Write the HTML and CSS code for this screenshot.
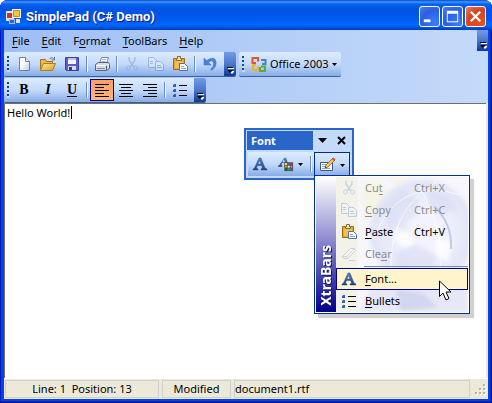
FILE: index.html
```html
<!DOCTYPE html>
<html lang="en">
<head>
<meta charset="utf-8">
<title>SimplePad (C# Demo)</title>
<link rel="stylesheet" href="styles.css">
</head>
<body>
<svg class="defs" aria-hidden="true">
  <defs>
    <linearGradient id="gold" x2="1" y2="1"><stop stop-color="#fff0a0"/><stop offset="1" stop-color="#e09a1c"/></linearGradient>
    <linearGradient id="paper" x2="1" y2="1"><stop offset=".4" stop-color="#fff"/><stop offset="1" stop-color="#b9cbe6"/></linearGradient>
    <linearGradient id="ink" x2="0" y2="1"><stop stop-color="#5b86c4"/><stop offset="1" stop-color="#1d3f7c"/></linearGradient>
    <symbol id="new" viewBox="0 0 16 16"><path d="M3.5 1.500h6l4 4v9h-10z" fill="url(#paper)" stroke="#6f82a6"/><path d="M9.500 1.500v4h4" fill="#dfe8f6" stroke="#6f82a6"/></symbol>
    <symbol id="open" viewBox="0 0 16 16"><path d="M.5 13.500v-10h5l1 2h6v8z" fill="#f0b840" stroke="#9a7420"/><path d="M.5 14.500l3-7h12l-3 7z" fill="url(#gold)" stroke="#b07f1c"/><path d="M9.500 2.500q3-2 5 1m0-2.500v3h-3" fill="none" stroke="#5d7fae"/></symbol>
    <symbol id="save" viewBox="0 0 16 16"><path d="M1.500 1.500h13v13h-12l-1-1z" fill="#5860c8" stroke="#3c4290"/><path d="M4 2h8v6H4z" fill="#f4f6ff"/><path d="M4 2h8v2H4z" fill="#b9c0ee"/><path d="M4 10h8v4H4z" fill="#d6d9e8"/><path d="M5 11h3v3H5z" fill="#343a80"/></symbol>
    <symbol id="print" viewBox="0 0 16 16"><path d="M5.500 7.500l2-6h7l-2 6z" fill="#fff" stroke="#7187ad"/><path d="M8 3.500h4M7.500 5.500h4" stroke="#9cb0cf"/><path d="M1.500 8.500l3-2h10l1 2v4l-3 2h-11z" fill="#d5dae3" stroke="#58657d"/><path d="M2 9.500h10.500l2.500-1.500" fill="none" stroke="#fff"/><path d="M3 12.500h8" stroke="#7f8ba2"/><path d="M12.500 9.500v4.500" stroke="#58657d"/></symbol>
    <symbol id="cut" viewBox="0 0 16 16"><g fill="none" stroke="#7c99cd"><path d="M5 1v3l5 7M11 1v3l-5 7" stroke-width="1.500"/><circle cx="4.500" cy="12" r="2"/><circle cx="11.500" cy="12" r="2"/></g></symbol>
    <symbol id="copy" viewBox="0 0 16 16"><g fill="#eef3fc" stroke="#6689c5"><path d="M.5 1.500h5l3 3v7h-8z"/><path d="M2 5.500h3M2 7.500h3"/><path d="M7.500 5.500h5l3 3v6h-8z"/><path d="M9 9.500h4M9 11.500h5"/></g></symbol>
    <symbol id="paste" viewBox="0 0 16 16"><path d="M1.500 2.500h11v11h-11z" fill="url(#gold)" stroke="#9a6d12"/><path d="M2 3h10v10H2z" fill="#eba72a"/><path d="M3 5h8v7H3z" fill="#f5bd4b"/><path d="M4.500 4.500v-2h1v-2h3v2h1v2z" fill="#eee1a8" stroke="#7b6a42"/><path d="M7.500 7.500h5l3 3v4h-8z" fill="#f4f8ff" stroke="#536fa4"/><path d="M9 10.500h3M9 12.500h5" stroke="#8aa2cf"/></symbol>
    <symbol id="undo" viewBox="0 0 16 16"><path d="M2 2v7h7L6.500 6.500Q10 3 11.500 6.500q1 3.500-2.500 6.500v1.500q6-3.500 5-9Q12.500-.5 4.500 4.500z" fill="#4b82d8" stroke="#3769b8" stroke-width=".5"/></symbol>
    <symbol id="left" viewBox="0 0 16 16"><path d="M1 2.500h14M1 5.500h9M1 8.500h14M1 11.500h9M1 14.500h14" stroke="#000"/></symbol>
    <symbol id="center" viewBox="0 0 16 16"><path d="M1 2.500h14M3 5.500h10M1 8.500h14M3 11.500h10M1 14.500h14" stroke="#000"/></symbol>
    <symbol id="right" viewBox="0 0 16 16"><path d="M1 2.500h14M6 5.500h9M1 8.500h14M6 11.500h9M1 14.500h14" stroke="#000"/></symbol>
    <symbol id="bullets" viewBox="0 0 16 16"><path d="M1 2h3v3H1zM1 7h3v3H1zM1 12h3v3H1z" fill="#365fae"/><path d="M1 2h1v1H1zM1 7h1v1H1zM1 12h1v1H1z" fill="#9db9e5"/><path d="M7 3.500h8M7 8.500h8M7 13.500h8" stroke="#000"/></symbol>
    <symbol id="fontcolor" viewBox="0 0 18 16"><path d="M7 1h2l3 8 2 1v1H8v-1l1-1-1-2H4.500L4 9l1 1v1H0v-1l1.500-1zM6.500 3L5 6h3z" fill="url(#ink)"/><path d="M7 6h10v10H7z" fill="#555"/><path d="M8 7h2v2H8z" fill="#ff0"/><path d="M11 7h2v2h-2z" fill="#36c"/><path d="M14 7h2v2h-2z" fill="#e22"/><path d="M8 10h2v2H8z" fill="#f90"/><path d="M11 10h2v2h-2z" fill="#fff"/><path d="M14 10h2v2h-2z" fill="#f5f"/><path d="M8 13h2v2H8z" fill="#070"/><path d="M11 13h2v2h-2z" fill="#0c3"/><path d="M14 13h2v2h-2z" fill="#45f"/></symbol>
    <symbol id="edit" viewBox="0 0 16 16"><path d="M.5 5.500h12v8H.5z" fill="#fff" stroke="#3c568c"/><path d="M2 7.500h6M2 9.500h5M2 11.500h8" stroke="#8ca4cc"/><path d="M5 11l1-3 7-7 2 2-7 7z" fill="#f8c45a" stroke="#80602a" stroke-width=".8"/><path d="M12 2l1.500-1.500 2 2L14 4z" fill="#e04838"/><path d="M5 11l.5-1.500 1 1z" fill="#222"/></symbol>
    <symbol id="clear" viewBox="0 0 16 16"><path d="M1.500 10.500l8-8h4l1 2-8 8h-4z" fill="#fff" stroke="#8f96b0"/><path d="M1.500 10.500h4l8-8M5.500 10.500l1 2M8 14.500h6" fill="none" stroke="#8f96b0"/></symbol>
    <symbol id="fontA" viewBox="0 0 16 16"><path d="M7 2h2l4 10 2 1v1H9v-1l1.500-1-1-2.500h-4L4.500 12 6 13v1H1v-1l1.500-1zM7.500 4.500L6 8h3z" fill="url(#ink)" stroke="#2d5596" stroke-width=".5"/></symbol>
    <symbol id="office" viewBox="0 0 16 16"><g fill="none" stroke-width="2"><path d="M5 7H1.500V2H7v3.500" stroke="#e8502c"/><path d="M10 4h4.500v4H11" stroke="#3f83d8"/><path d="M5 9H2v5h5v-3.500" stroke="#f0b41c"/><path d="M9 11v4h5v-4.500H10" stroke="#62a83c"/></g></symbol>
    <symbol id="more" viewBox="0 0 8 8"><path d="M2 2h6v1H2zM3 5h6l-3 3z" fill="#fff"/><path d="M1 1h6v1H1zM1 4h6L4 7z" fill="#000"/></symbol>
    <symbol id="down" viewBox="0 0 5 3"><path d="M0 0h5L2.500 3z"/></symbol>
  </defs>
</svg>

<main class="window">
  <header class="titlebar">
    <svg class="app-icon" viewBox="0 0 16 16" aria-hidden="true"><path d="M0 2h8v10H0z" fill="#e8e2d6"/><path d="M1 4h5v5H1z" fill="#c33628"/><path d="M6 0h9v9H6z" fill="#f4f1e6"/><path d="M7.500 1.500h6v6h-6z" fill="#f6c544" stroke="#c98f1e"/><path d="M3 10h6v5H3z" fill="#9cbcf2"/><path d="M4 11h4v3H4z" fill="#2f66d0"/><path d="M10 10h4v4h-4z" fill="#e6e1d2"/></svg>
    <h1 class="title">SimplePad (C# Demo)</h1>
    <button class="caption" aria-label="Minimize"><svg viewBox="0 0 20 20"><path d="M4 13h7v3H4z"/></svg></button>
    <button class="caption" aria-label="Maximize"><svg viewBox="0 0 20 20"><path fill-rule="evenodd" d="M4 4h12v12H4zm1 3v8h10V7z"/></svg></button>
    <button class="caption close" aria-label="Close"><svg viewBox="0 0 20 20"><path d="M5 5l10 10M15 5L5 15" stroke="#fff" stroke-width="2.400"/></svg></button>
  </header>

  <div class="client">
    <div class="dock">
      <nav class="menubar">
        <button><u>F</u>ile</button><button><u>E</u>dit</button><button>F<u>o</u>rmat</button><button><u>T</u>oolBars</button><button><u>H</u>elp</button>
        <button class="overflow" aria-label="Menu options"><svg><use href="#more"/></svg></button>
      </nav>
      <div class="bar-row">
        <div class="toolbar" role="toolbar" aria-label="Standard">
          <span class="grip"></span>
          <button class="tool" aria-label="New"><svg><use href="#new"/></svg></button>
          <button class="tool" aria-label="Open"><svg><use href="#open"/></svg></button>
          <button class="tool" aria-label="Save"><svg><use href="#save"/></svg></button>
          <span class="sep"></span>
          <button class="tool" aria-label="Print"><svg><use href="#print"/></svg></button>
          <span class="sep"></span>
          <button class="tool" aria-label="Cut" disabled><svg><use href="#cut"/></svg></button>
          <button class="tool" aria-label="Copy" disabled><svg><use href="#copy"/></svg></button>
          <button class="tool" aria-label="Paste"><svg><use href="#paste"/></svg></button>
          <span class="sep"></span>
          <button class="tool" aria-label="Undo"><svg><use href="#undo"/></svg></button>
          <button class="overflow" aria-label="Standard options"><svg><use href="#more"/></svg></button>
        </div>
        <div class="toolbar" role="toolbar" aria-label="Theme">
          <span class="grip"></span>
          <button class="theme"><svg><use href="#office"/></svg>Office 2003<svg class="arrow"><use href="#down"/></svg></button>
        </div>
      </div>
      <div class="bar-row">
        <div class="toolbar" role="toolbar" aria-label="Formatting">
          <span class="grip"></span>
          <button class="tool glyph" aria-label="Bold"><b>B</b></button>
          <button class="tool glyph" aria-label="Italic"><i>I</i></button>
          <button class="tool glyph" aria-label="Underline"><u>U</u></button>
          <span class="sep"></span>
          <button class="tool checked" aria-label="Align left" aria-pressed="true"><svg><use href="#left"/></svg></button>
          <button class="tool" aria-label="Align center"><svg><use href="#center"/></svg></button>
          <button class="tool" aria-label="Align right"><svg><use href="#right"/></svg></button>
          <span class="sep"></span>
          <button class="tool" aria-label="Bullets"><svg><use href="#bullets"/></svg></button>
          <button class="overflow" aria-label="Formatting options"><svg><use href="#more"/></svg></button>
        </div>
      </div>
    </div>

    <div class="editor">
      <textarea aria-label="Document" spellcheck="false">Hello World!</textarea>
      <span class="caret"></span>
    </div>

    <footer class="status">
      <span class="cell position">Line: 1&nbsp; Position: 13</span>
      <span class="cell modified">Modified</span>
      <span class="cell file">document1.rtf</span>
      <svg class="size-grip" viewBox="0 0 11 11" aria-hidden="true"><path d="M9 1h2v2H9zM5 5h2v2H5zM9 5h2v2H9zM1 9h2v2H1zM5 9h2v2H5zM9 9h2v2H9z" fill="#fff"/><path d="M8 0h2v2H8zM4 4h2v2H4zM8 4h2v2H8zM0 8h2v2H0zM4 8h2v2H4zM8 8h2v2H8z" fill="#b5b2a2"/></svg>
    </footer>
  </div>
</main>

<section class="palette" aria-label="Font">
  <header class="palette-head">
    <h2>Font</h2>
    <button aria-label="Font bar options"><svg viewBox="0 0 11 11"><path d="M1 3h9L5.500 8z"/></svg></button>
    <button aria-label="Close Font bar"><svg viewBox="0 0 11 11"><path d="M2 2l7 7M9 2L2 9" stroke="#000" stroke-width="2"/></svg></button>
  </header>
  <div class="palette-tools">
    <button class="tool" aria-label="Font"><svg><use href="#fontA"/></svg></button>
    <button class="tool split" aria-label="Font color"><svg><use href="#fontcolor"/></svg><svg class="arrow"><use href="#down"/></svg></button>
    <span class="sep"></span>
    <button class="tool split opened" aria-label="Edit" aria-expanded="true"><svg><use href="#edit"/></svg><svg class="arrow"><use href="#down"/></svg></button>
  </div>
</section>

<div class="popup" role="menu">
  <div class="brand"><span>XtraBars</span></div>
  <svg class="globe" viewBox="0 0 133 137" preserveAspectRatio="none" aria-hidden="true">
    <defs>
      <filter id="soft"><feGaussianBlur stdDeviation="2"/></filter>
      <radialGradient id="sphere"><stop offset=".4" stop-color="#f2f3fd"/><stop offset="1" stop-color="#e0e3f7"/></radialGradient>
    </defs>
    <rect width="133" height="137" fill="#f6f6fc"/>
    <path d="M0 0h22v137H0z" fill="#f3f2e8"/>
    <g filter="url(#soft)">
      <path d="M26 5h20l10 15-10 20-18 5zM52 0h24l-14 8z" fill="#f6f4e4"/>
      <circle cx="87" cy="56" r="53" fill="url(#sphere)"/>
      <path d="M48 28l20-15 15 10-2 16-11 7 3 10-10 10-10-8zM93 12l20 8 11 18-10-4-8 6-13-11zM60 76l20-8 22 12-7 17-15 14-18-9z" fill="#d3d7f1" opacity=".5"/>
      <path d="M58 52l14 3 7 12-9 5-12-9zM101 62l17 4-5 21-13-8z" fill="#fff" opacity=".8"/>
      <path d="M45 98q36 29 80-1l8 18v22H22z" fill="#e7e8f7"/>
      <path d="M60 114l28 4 15 15-38 3z" fill="#d2d6ee"/>
    </g>
    <g fill="none"><path d="M38 63Q61-1 126 18M56 102Q50 36 101 5M102 106Q115 65 83 8" stroke="#fff" opacity=".7"/><path d="M99 30q18 17 17 43" stroke="#c3c9e6" stroke-width="2"/></g>
  </svg>
  <div class="items">
    <button role="menuitem" disabled><svg><use href="#cut"/></svg><span>Cu<u>t</u></span><kbd>Ctrl+X</kbd></button>
    <button role="menuitem" disabled><svg><use href="#copy"/></svg><span><u>C</u>opy</span><kbd>Ctrl+C</kbd></button>
    <button role="menuitem"><svg><use href="#paste"/></svg><span><u>P</u>aste</span><kbd>Ctrl+V</kbd></button>
    <button role="menuitem" disabled><svg><use href="#clear"/></svg><span>Cle<u>a</u>r</span></button>
    <hr>
    <button role="menuitem" class="hot"><svg><use href="#fontA"/></svg><span><u>F</u>ont...</span></button>
    <button role="menuitem"><svg><use href="#bullets"/></svg><span><u>B</u>ullets</span></button>
  </div>
</div>

<svg class="pointer" viewBox="0 0 13 21" aria-hidden="true"><path d="M.5 1v15.500l3.500-3.500 3 7 3-1.500-3-6.500h5z" fill="#fff" stroke="#000"/></svg>
</body>
</html>
```
FILE: styles.css
```css
* { box-sizing: border-box; }

body {
  margin: 0;
  min-height: 100vh;
  background: #fff;
  color: #000;
  font: 11px/14px "Noto Sans", "Open Sans", sans-serif;
}

button {
  margin: 0;
  padding: 0;
  border: 0;
  background: none;
  color: inherit;
  font: inherit;
}

u { text-underline-offset: 2px; }
.defs { position: absolute; width: 0; height: 0; }

/* Window frame */
.window {
  display: flex;
  flex-direction: column;
  height: 100vh;
  padding: 0 4px 4px;
  border-radius: 8px 8px 0 0;
  background: #0842de;
  box-shadow: inset -1px -1px #00138c, inset 1px 0 #0019cf, inset -2px -2px #0030c4;
}

.titlebar {
  display: flex;
  align-items: center;
  gap: 2px;
  height: 30px;
  margin: 0 -4px;
  padding: 3px 6px 0;
  border-radius: 8px 8px 0 0;
  background: linear-gradient(#0a48c8 0, #3c96ff 2px, #0663f0 4px, #0054e3 8px, #0058ec 18px, #0068ff 25px, #0050dc 28px, #0039b4);
}

.app-icon { width: 16px; height: 16px; margin-right: 2px; }

.title {
  flex: 1;
  margin: 0;
  color: #fff;
  font: bold 13px/18px Roboto, "Open Sans", sans-serif;
  text-shadow: 1px 1px #0a1883;
}

.caption {
  width: 21px;
  height: 21px;
  border: 1px solid #fff;
  border-radius: 3px;
  background: radial-gradient(circle at 80% 85%, #3b7cf8, #2a5fe4 60%, #4a7cee);
}

.caption svg { display: block; width: 19px; height: 19px; fill: #fff; }
.close { background: radial-gradient(circle at 80% 85%, #e8501c, #d84424 60%, #e88068); }

.client {
  display: flex;
  flex: 1;
  flex-direction: column;
  min-height: 0;
  background: #ece9d8;
}

/* Menu and toolbars */
.dock { background: linear-gradient(90deg, #9ebef5, #c4daf9); }
.menubar { display: flex; height: 21px; padding-left: 2px; }
.menubar button { padding: 0 6px; }
.menubar .overflow { width: 11px; margin: 0 0 0 auto; padding: 0 0 2px; border-radius: 0; }

.bar-row { display: flex; gap: 3px; height: 26px; padding-top: 1px; }

.toolbar {
  display: flex;
  height: 25px;
  border-bottom: 1px solid #3b619c;
  border-radius: 2px;
  background: linear-gradient(#ddebfe, #c3dafb 50%, #87ace6);
}

.grip {
  width: 3px;
  height: 16px;
  margin: 4px 2px 0 3px;
  background:
    repeating-linear-gradient(transparent 0 2px, #c5dbfb 2px 4px) 2px 0 / 1px,
    repeating-linear-gradient(#27417a 0 2px, transparent 2px 4px) 0 0 / 2px no-repeat;
}

.tool {
  display: flex;
  align-items: center;
  justify-content: center;
  width: 24px;
  height: 24px;
}

.tool svg { width: 16px; height: 16px; }
.tool:disabled svg { opacity: .45; }
.tool .arrow, .arrow { width: 5px; height: 3px; }

.sep {
  width: 2px;
  height: 16px;
  margin: 4px 2px 0;
  border-left: 1px solid #6a8ccb;
  background: #f1f9ff;
}

.glyph { font: 14px/16px "Liberation Serif", serif; font-weight: bold; }

.checked {
  height: 22px;
  margin-top: 1px;
  border: 1px solid #000080;
  background: linear-gradient(#fe9f60, #ffb67a);
}

.overflow {
  display: flex;
  align-items: flex-end;
  justify-content: center;
  width: 12px;
  margin-left: 2px;
  padding-bottom: 2px;
  border-radius: 0 2px 2px 0;
  background: linear-gradient(#759be6, #4a78c9 50%, #0b3a9c);
}

.overflow svg { width: 8px; height: 8px; }

.theme { display: flex; align-items: center; gap: 3px; padding: 0 4px; }
.theme svg { width: 16px; height: 16px; }
.theme .arrow { width: 5px; height: 3px; }

/* Document */
.editor {
  position: relative;
  display: flex;
  flex: 1;
  min-height: 0;
  margin-right: 2px;
  border: solid #716f64;
  border-width: 1px 0 0 1px;
  background: #fff;
}

.editor textarea {
  flex: 1;
  padding: 2px;
  border: 0;
  outline: 0;
  background: none;
  color: inherit;
  font: inherit;
  resize: none;
}

.caret { position: absolute; top: 2px; left: 66px; width: 1px; height: 13px; background: #000; }

/* Status bar */
.status {
  display: flex;
  align-items: center;
  gap: 3px;
  height: 21px;
  padding: 0 2px 0 1px;
  border-top: 1px solid #fff;
}

.cell { height: 18px; padding: 1px 0; border: 1px solid #cfd0cf; }
.position { width: 154px; text-align: center; }
.modified { width: 69px; text-align: center; }
.file { flex: 1; }
.size-grip { width: 11px; height: 11px; margin-left: 2px; }

/* Floating Font bar */
.palette {
  position: absolute;
  top: 128px;
  left: 244px;
  width: 110px;
  padding: 1px;
  border: 2px solid #2a66c9;
  background: #c4daf9;
}

.palette-head { display: flex; align-items: center; height: 19px; }

.palette h2 {
  flex: 1;
  margin: 0;
  padding: 0 4px;
  background: #2a66c9;
  color: #fff;
  font: bold 11px/19px "Noto Sans", "Open Sans", sans-serif;
}

.palette-head button { width: 19px; height: 19px; }
.palette-head svg { display: block; width: 11px; height: 11px; margin: auto; }

.palette-tools {
  display: flex;
  height: 24px;
  margin: 2px 1px 1px;
  background: linear-gradient(#ddebfe, #c3dafb 50%, #87ace6);
}

.split { gap: 4px; width: 36px; }
.opened { height: 25px; border: 1px solid #002d96; border-bottom: 0; }

/* Popup menu */
.popup {
  position: absolute;
  top: 175px;
  left: 314px;
  display: flex;
  width: 156px;
  padding: 1px;
  border: 1px solid #002d96;
  background: #fff;
  box-shadow: 4px 4px 1px rgba(0, 0, 0, .18);
}

.brand {
  display: flex;
  align-items: flex-end;
  justify-content: center;
  width: 20px;
  padding-bottom: 6px;
  background: linear-gradient(#fff, #a9a9dc 35%, #00008c);
}

.brand span {
  color: #fff;
  font: bold 14px/18px "Noto Sans", "Open Sans", sans-serif;
  text-shadow: -1px 1px #15154a;
  writing-mode: vertical-rl;
  transform: rotate(180deg);
}

.globe { position: absolute; top: 1px; left: 21px; width: calc(100% - 22px); height: calc(100% - 2px); }
.items { position: relative; flex: 1; min-width: 0; }

.items button {
  display: flex;
  align-items: center;
  width: 100%;
  height: 22px;
  padding: 0 4px;
  border: 1px solid transparent;
  text-align: left;
}

.items svg { flex: none; width: 16px; height: 16px; margin-right: 8px; }
.items span { width: 49px; }
.items kbd { font: inherit; }
.items button:disabled { color: #8d8d8d; }
.items button:disabled svg { opacity: .35; }
.items hr { height: 1px; margin: 1px 0 1px 28px; border: 0; background: #6a8ccb; }
.items .hot { border-color: #000080; background: #fff4cc; }

.pointer { position: absolute; top: 280px; left: 439px; width: 13px; height: 21px; }
```
